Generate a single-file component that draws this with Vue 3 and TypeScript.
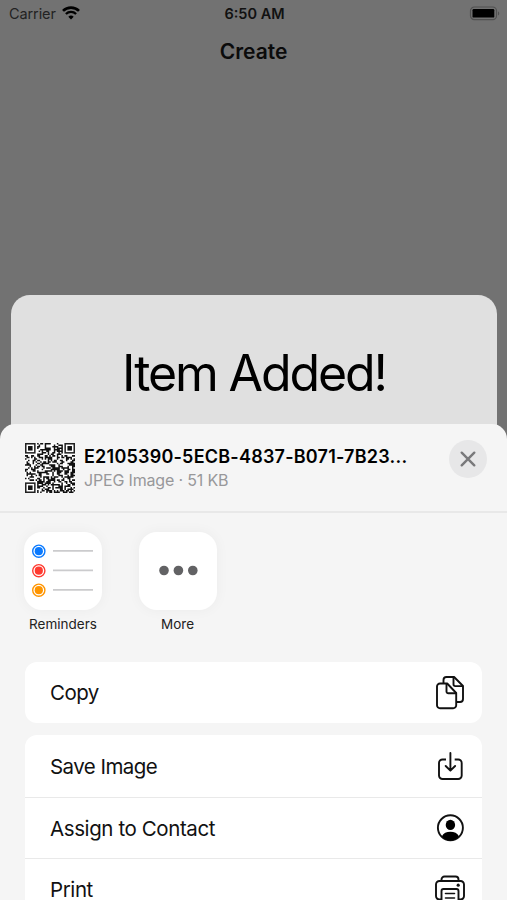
<script setup lang="ts">
interface Action { id: string; label: string }

const groups: Action[][] = [
  [{ id: 'copy', label: 'Copy' }],
  [
    { id: 'save', label: 'Save Image' },
    { id: 'contact', label: 'Assign to Contact' },
    { id: 'print', label: 'Print' },
  ],
]

const reminderColors: string[] = ['#0a7aff', '#ff3b30', '#ff9500']

const QR_SIZE = 33

function inFinder(x: number, y: number): boolean {
  const edge = QR_SIZE - 8
  return (x < 8 && y < 8) || (x >= edge && y < 8) || (x < 8 && y >= edge)
}

function buildQr(): string {
  let seed = 51237
  let d = ''
  for (let y = 0; y < QR_SIZE; y++) {
    for (let x = 0; x < QR_SIZE; x++) {
      seed = (seed * 1103515245 + 12345) % 2147483648
      if (!inFinder(x, y) && seed / 2147483648 < 0.52) d += `M${x} ${y}h1v1h-1z`
    }
  }
  return d
}

const qrModules = buildQr()
const finders: [number, number][] = [[0, 0], [QR_SIZE - 7, 0], [0, QR_SIZE - 7]]
</script>

<template>
  <div class="screen">
    <header class="status">
      <div class="carrier">
        <span class="carrier-name">Carrier</span>
        <svg class="wifi" viewBox="0 0 18 14" width="18" height="14" fill="none" stroke="#000">
          <path d="M1 4.900a11.400 11.400 0 0 1 16 0" stroke-width="2.700" />
          <path d="M3.900 8a7.300 7.300 0 0 1 10.200 0" stroke-width="2.300" />
          <path d="M9 13.600 6.300 10.800a3.900 3.900 0 0 1 5.400 0z" fill="#000" stroke="none" />
        </svg>
      </div>
      <span class="time">6:50 AM</span>
      <svg class="battery" viewBox="0 0 31 15" width="31" height="15">
        <rect x="1.500" y="1" width="26" height="12.600" rx="3.800" fill="none" stroke="#505050" stroke-width="1.200" />
        <rect x="3.500" y="3" width="21.800" height="8.600" rx="1.200" fill="#000" />
        <path d="M29 5.200c1.700.8 1.700 3.600 0 4.400z" fill="#505050" />
      </svg>
    </header>
    <h1 class="nav-title">Create</h1>

    <section class="card"><p class="card-title">Item Added!</p></section>

    <section class="sheet">
      <div class="sheet-head">
        <svg class="qr" :viewBox="`0 0 ${QR_SIZE} ${QR_SIZE}`" width="50" height="50">
          <rect width="33" height="33" fill="#fff" />
          <path :d="qrModules" fill="#111" />
          <g v-for="([x, y], i) in finders" :key="i">
            <rect :x="x + 0.5" :y="y + 0.5" width="6" height="6" fill="none" stroke="#222" />
            <rect :x="x + 2" :y="y + 2" width="3" height="3" fill="#111" />
          </g>
        </svg>
        <div class="file">
          <div class="file-name">E2105390-5ECB-4837-B071-7B23...</div>
          <div class="file-meta">JPEG Image · 51 KB</div>
        </div>
        <button class="close" aria-label="Close">
          <svg viewBox="0 0 16 16" width="16" height="16" stroke="#79797b" stroke-width="2.400" stroke-linecap="round">
            <path d="M1.700 1.700 14.300 14.300M14.300 1.700 1.700 14.300" />
          </svg>
        </button>
      </div>

      <div class="apps">
        <div class="app">
          <div class="tile">
            <svg viewBox="0 0 78 78" width="78" height="78">
              <g v-for="(color, i) in reminderColors" :key="color">
                <circle cx="14.800" :cy="19.2 + i * 19.5" r="6.100" fill="#fff" :stroke="color" stroke-width="1.400" />
                <circle cx="14.800" :cy="19.2 + i * 19.5" r="4.100" :fill="color" />
                <path :d="`M29 ${18.9 + i * 19.5}H69`" stroke="#cbcbcd" stroke-width="1.600" />
              </g>
            </svg>
          </div>
          <span class="app-name">Reminders</span>
        </div>
        <div class="app">
          <div class="tile">
            <svg viewBox="0 0 78 78" width="78" height="78" fill="#626264">
              <circle cx="25" cy="38.500" r="4.800" />
              <circle cx="39.400" cy="38.500" r="4.800" />
              <circle cx="53.800" cy="38.500" r="4.800" />
            </svg>
          </div>
          <span class="app-name">More</span>
        </div>
      </div>

      <div v-for="(group, g) in groups" :key="g" class="group">
        <div v-for="action in group" :key="action.id" class="row">
          <span :class="['label', action.id]">{{ action.label }}</span>
          <svg class="icon" viewBox="0 0 32 36" width="32" height="36" fill="none" stroke="#111" stroke-width="1.900" stroke-linejoin="round" stroke-linecap="round">
            <template v-if="action.id === 'copy'">
              <path d="M9.500 8V5a3 3 0 0 1 3-3h7.600L29 11v13a3 3 0 0 1-3 3h-3" />
              <path d="M19.500 2.500v6.800a1.800 1.800 0 0 0 1.800 1.800H28" />
              <path d="M6 8.500h7.200L22.200 18v12.200a3 3 0 0 1-3 3H6a3 3 0 0 1-3-3V11.500a3 3 0 0 1 3-3z" fill="#fff" />
              <path d="M12.500 9v7.500a1.800 1.800 0 0 0 1.800 1.800H21.500" />
            </template>
            <template v-else-if="action.id === 'save'">
              <path d="M12 11.500H8.500A3.500 3.500 0 0 0 5 15v12.500A3.500 3.500 0 0 0 8.500 31h15.700a3.500 3.500 0 0 0 3.500-3.500V15a3.500 3.500 0 0 0-3.500-3.500H20.700" stroke-linecap="butt" />
              <path d="M16.400 5v17.500M11.700 18l4.700 4.700 4.700-4.700" />
            </template>
            <template v-else-if="action.id === 'contact'">
              <circle cx="16.400" cy="17.800" r="12.500" />
              <ellipse cx="16.400" cy="14.900" rx="4.700" ry="5.200" fill="#000" stroke="none" />
              <path d="M7.900 26.200c1.400-3 4.700-4.400 8.500-4.400s7.100 1.400 8.500 4.400c-2.200 2.900-5.200 4.200-8.500 4.200s-6.300-1.300-8.500-4.200z" fill="#000" stroke="none" />
            </template>
            <template v-else>
              <path d="M7.500 9V7.500A3 3 0 0 1 10.500 4.500h11A3 3 0 0 1 24.500 7.500V9" />
              <path d="M7 27.500H5.500a3.500 3.500 0 0 1-3.500-3.500V12.500A3.500 3.500 0 0 1 5.500 9h21a3.500 3.500 0 0 1 3.500 3.500V24a3.500 3.500 0 0 1-3.500 3.500H25" />
              <path d="M7.500 32V19a2 2 0 0 1 2-2h13a2 2 0 0 1 2 2v13" />
              <path d="M11.500 21.500h9M11.500 26h9" stroke-width="1.600" />
              <circle cx="24.200" cy="13.200" r="1.600" fill="#111" stroke="none" />
            </template>
          </svg>
        </div>
      </div>
    </section>
  </div>
</template>

<style>
body { background: #727272; overflow: hidden; }
</style>

<style scoped>
.screen {
  width: 507px;
  height: 900px;
  overflow: hidden;
  background: #727272;
  color: #000;
  font-family: Inter, "Liberation Sans", sans-serif;
  box-sizing: border-box;
}
.status {
  display: grid;
  grid-template-columns: 1fr auto 1fr;
  align-items: center;
  height: 27px;
  padding: 0 7px 0 9px;
}
.carrier { display: flex; align-items: center; gap: 6px; font-size: 14.500px; letter-spacing: -.100px; color: #222; }
.wifi { margin-bottom: 2px; }
.time { font-size: 14.500px; font-weight: 600; color: #111; }
.battery { justify-self: end; }
.nav-title {
  margin: 0;
  height: 49px;
  line-height: 49px;
  text-align: center;
  font-size: 21px;
  font-weight: 600;
  color: #0b0b0b;
}
.card {
  height: 149px;
  margin: 219px 10px 0 11px;
  border-radius: 19px 19px 0 0;
  background: #e0e0e0;
  text-align: center;
}
.card-title { margin: 0; padding-top: 48px; font-size: 50px; line-height: 60px; letter-spacing: -2.100px; }
.sheet {
  height: 476px;
  margin-top: -20px;
  position: relative;
  border-radius: 15px 15px 0 0;
  background: #f5f5f5;
  overflow: hidden;
}
.sheet-head {
  display: flex;
  height: 89px;
  box-sizing: border-box;
  padding: 19px 20px 0 25px;
  border-bottom: 2px solid #e8e8e8;
}
.qr { flex: none; }
.file { flex: 1; padding-left: 9px; white-space: nowrap; }
.file-name { font-size: 18px; font-weight: 600; line-height: 28px; letter-spacing: .220px; }
.file-meta { font-size: 16px; line-height: 18px; letter-spacing: -.170px; color: #98989a; }
.close {
  display: grid;
  place-items: center;
  width: 38px;
  height: 38px;
  margin-top: -3px;
  padding: 0;
  border: 0;
  border-radius: 50%;
  background: #e7e7e8;
}
.apps { display: flex; gap: 36.500px; padding: 19px 24px 0; height: 148.500px; box-sizing: border-box; }
.app { width: 78px; display: flex; flex-direction: column; align-items: center; }
.tile { width: 78px; height: 78px; border-radius: 18px; background: #fff; box-shadow: 0 0 14px rgba(0, 0, 0, .045); }
.app-name { margin-top: 4px; font-size: 13.500px; line-height: 20px; color: #222; }
.group { margin: 0 25px 12px; border-radius: 12px; background: #fff; overflow: hidden; }
.row {
  display: flex;
  align-items: center;
  justify-content: space-between;
  height: 61.500px;
  box-sizing: border-box;
  padding: 1px 16px 0 25px;
}
.row + .row { border-top: 1.500px solid #e9e9e9; }
.label { font-size: 20.500px; color: #111; letter-spacing: -.400px; }
.label.copy, .label.save { letter-spacing: -.550px; }
</style>
